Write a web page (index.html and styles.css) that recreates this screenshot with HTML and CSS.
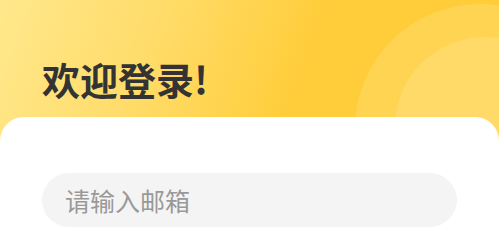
FILE: index.html
```html
<!DOCTYPE html>
<html lang="zh-CN">
<head>
  <meta charset="UTF-8" />
  <meta name="viewport" content="width=device-width, initial-scale=1.0"/>
  <title>欢迎登录</title>
  <link rel="stylesheet" href="styles.css">
</head>
<body>
  <div class="header">
    <div class="circle circle-outer"></div>
    <div class="circle circle-inner"></div>
    <h1 class="title">欢迎登录!</h1>
  </div>

  <div class="card">
    <input class="input" type="text" placeholder="请输入邮箱" />
  </div>
</body>
</html>
```

FILE: styles.css
```css
body {
  margin: 0;
  padding: 0;
  font-family: "Noto Sans CJK SC", "Noto Sans", sans-serif;
  background: #fff;
  overflow: hidden;
}

.header {
  position: relative;
  height: 141px;
  overflow: hidden;
  background: linear-gradient(110deg, #ffe88c 0%, #ffdc6a 30%, #ffcd3a 60%, #ffcd3a 100%);
}

.circle {
  position: absolute;
  border-radius: 50%;
}

.circle-outer {
  left: 355px;
  top: 4px;
  width: 250px;
  height: 250px;
  background: #ffd452;
}

.circle-inner {
  left: 395px;
  top: 37px;
  width: 180px;
  height: 180px;
  background: #ffda68;
}

.title {
  position: relative;
  margin: 0;
  padding: 52px 0 0 42px;
  font-size: 38px;
  line-height: 54px;
  font-weight: bold;
  color: #333;
}

.card {
  position: relative;
  margin-top: -24px;
  padding: 56px 42px 18px 42px;
  background: #fff;
  border-radius: 24px 24px 0 0;
}

.input {
  display: block;
  box-sizing: border-box;
  width: 100%;
  height: 54px;
  padding: 0 23px;
  border: none;
  outline: none;
  border-radius: 27px;
  background: #f4f4f4;
  font-family: inherit;
  font-size: 25px;
  color: #333;
}

.input::placeholder {
  color: #999;
}
```
